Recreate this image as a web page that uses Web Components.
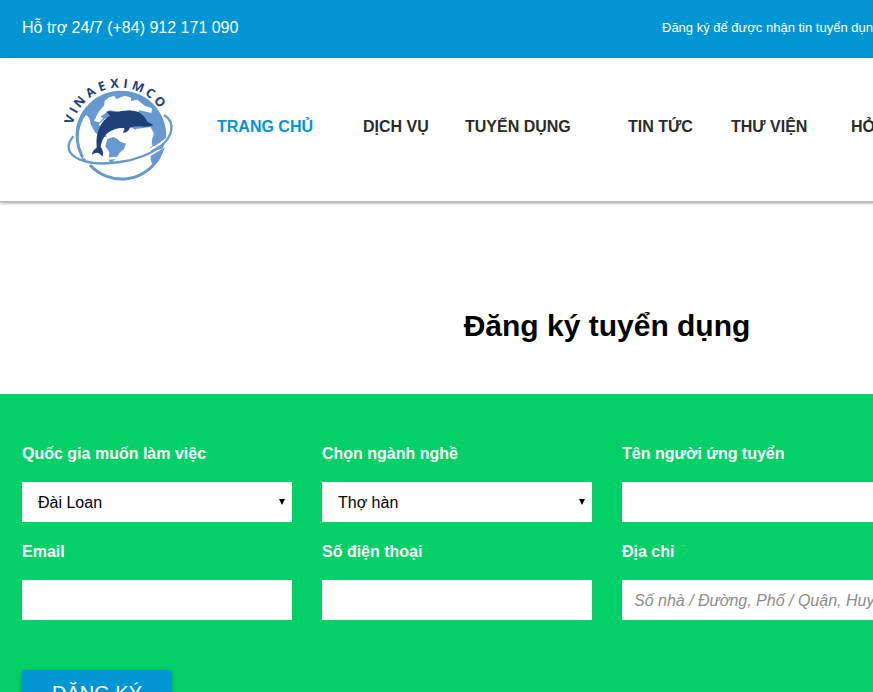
<!DOCTYPE html>
<html lang="vi">
<head>
<meta charset="utf-8">
<title>Vinaeximco – Đăng ký tuyển dụng</title>
<style>
html{overflow-x:hidden}
body{margin:0;background:#fff;font-family:"Liberation Sans",Arial,sans-serif;font-size:16px;line-height:24px}
recruit-page{--blue:#0096d3;--green:#03d066}
</style>
</head>
<body>
<recruit-page></recruit-page>

<script>
const define = (name, html, setup) => customElements.define(name, class extends HTMLElement {
  constructor() {
    super();
    const t = document.createElement('template');
    t.innerHTML = html;
    this.attachShadow({ mode: 'open' }).append(t.content.cloneNode(true));
  }
  connectedCallback() { if (setup) setup(this, this.shadowRoot); }
});

define('top-bar', `
<style>
:host{display:flex;justify-content:space-between;align-items:center;background:var(--blue);color:#fff;padding:0 22px 2px;height:58px;box-sizing:border-box}
.news{font-size:13px;width:530px}
</style>
<div><slot name="support"></slot></div>
<div class="news"><slot name="news"></slot></div>`);

define('site-logo', `
<style>
:host{display:block;width:140px}
a,svg{display:block}
text{font:bold 38px "Open Sans",sans-serif;fill:#1d3f7a}
</style>
<a href="#" aria-label="Vinaeximco">
<svg viewBox="0 0 420 390" width="140" height="130">
<defs>
<path id="arc" d="M64 213A145 145 0 0 1 354 213"/>
<clipPath id="globe"><circle cx="213" cy="213" r="136"/></clipPath>
</defs>
<text><textPath href="#arc"><tspan dx="34 9 7 11 12 12 12 11 8 8">VINAEXIMCO</tspan></textPath></text>
<g clip-path="url(#globe)">
<path fill="#6699cf" d="M76 214Q70 130 130 96Q180 66 240 78Q300 90 334 140Q352 175 350 222L338 250L304 262Q296 240 306 228L300 200L260 196L210 170L166 160L146 178L156 192L170 216L150 216L134 200L122 178Q120 156 108 150Q90 172 84 216Z"/>
<path fill="#fff" d="M176 98L192 92L200 102L224 92L244 98L242 108L262 104L284 122L306 130L304 144L268 136L262 146L240 136L214 142L196 138L178 136L164 146L152 154L160 160L148 172L132 168L146 140L162 122L164 108Z"/>
<path fill="#fff" d="M258 192L302 186L312 206L304 228L308 244L280 254L254 234Z"/>
<path fill="#6699cf" d="M172 222L190 216L202 222L210 230L228 236L222 252L208 264L200 280L182 294L176 284L178 262L166 244Z"/>
<path fill="#6699cf" d="M302 272L326 258L346 246L326 290L306 296L302 284Z"/>
</g>
<path fill="none" stroke="#6699cf" stroke-width="9" d="M112 128A132 132 0 0 0 104 286"/>
<path fill="none" stroke="#6699cf" stroke-width="9" d="M120 300A128 128 0 0 0 332 266"/>
<path fill="none" stroke="#fff" stroke-width="7" d="M352 220C300 266 210 292 100 276"/>
<path fill="none" stroke="#6699cf" stroke-width="7" d="M70 214C46 242 52 268 90 284C150 308 270 292 332 244C368 214 378 172 342 150"/>
<path fill="#1d3f7a" d="M168 140Q184 136 196 142Q230 132 264 140Q282 150 292 170L310 180Q300 187 270 184Q250 184 240 188Q234 203 218 203Q226 192 222 189Q192 188 170 206Q154 224 152 246Q163 260 157 275Q148 262 140 263Q132 264 125 269Q129 254 140 248Q136 210 152 180Q162 162 180 152Q174 144 168 140Z"/>
</svg></a>`);

define('nav-link', `
<style>
:host{display:block}
a{color:#2b2b2b;font-weight:bold;text-decoration:none;text-transform:uppercase;white-space:nowrap}
:host([active]) a{color:var(--blue)}
</style>
<a href="#"><slot></slot></a>`);

define('site-header', `
<style>
:host{display:flex;align-items:center;height:144px;padding-left:50px;box-sizing:border-box;background:#fff;border-bottom:1px solid #b8b8b8;box-shadow:0 1px 3px rgba(0,0,0,.4);position:relative}
nav{display:grid;grid-template-columns:146px 102px 163px 103px 120px auto;margin-left:27px;margin-bottom:6px}
</style>
<site-logo></site-logo>
<nav><slot></slot></nav>`);

define('form-field', `
<style>
:host{display:block}
label{display:block;color:#fff;font-weight:bold;margin-bottom:16px;line-height:24px}
input,select{display:block;width:100%;height:40px;box-sizing:border-box;border:0;border-radius:0;background:#fff;color:#000;font:16px/24px "Liberation Sans",Arial,sans-serif;margin:0;padding:2px 12px 0;appearance:none}
select{padding:2px 16px 0}
input::placeholder{color:#8c8c8c;font-style:italic;opacity:1}
.box{display:grid;align-items:center}
.box>*{grid-area:1/1}
svg{justify-self:end;margin-right:7px;pointer-events:none}
</style>
<label for="c"></label><div class="box"></div>`, (el, root) => {
  root.querySelector('label').textContent = el.getAttribute('label');
  const value = el.getAttribute('option');
  const box = root.querySelector('.box');
  if (value) {
    box.innerHTML = '<select id="c"><option></option></select><svg width="6" height="6" aria-hidden="true"><path d="M0 0h6L3 6z"/></svg>';
    box.querySelector('option').textContent = value;
  } else {
    box.innerHTML = '<input id="c" type="text">';
    box.firstChild.type = el.getAttribute('type') || 'text';
    box.firstChild.placeholder = el.getAttribute('placeholder') || '';
  }
});

define('recruit-form', `
<style>
:host{display:block}
h1{margin:0;padding:103px 0 47px;text-align:center;font-size:30px;line-height:42px;color:#000}
form{background:var(--green);padding:48px 22px 60px}
.grid{display:grid;grid-template-columns:repeat(4,1fr);gap:18px 30px}
button{display:block;margin-top:50px;height:46px;padding:0 30px;border:0;border-radius:2px;background:var(--blue);color:#fff;font:20px/24px "Liberation Sans",Arial,sans-serif;box-shadow:0 2px 4px rgba(0,0,0,.25)}
</style>
<h1>Đăng ký tuyển dụng</h1>
<form>
<div class="grid">
<form-field label="Quốc gia muốn làm việc" option="Đài Loan"></form-field>
<form-field label="Chọn ngành nghề" option="Thợ hàn"></form-field>
<form-field label="Tên người ứng tuyển" style="grid-column:span 2"></form-field>
<form-field label="Email" type="email"></form-field>
<form-field label="Số điện thoại" type="tel"></form-field>
<form-field label="Địa chỉ" placeholder="Số nhà / Đường, Phố / Quận, Huyện" style="grid-column:span 2"></form-field>
</div>
<button type="button">ĐĂNG KÝ</button>
</form>`);

define('recruit-page', `
<style>
:host{display:block;min-width:1214px}
</style>
<top-bar><span slot="support">Hỗ trợ 24/7 (+84) 912 171 090</span><span slot="news">Đăng ký để được nhận tin tuyển dụng</span></top-bar>
<site-header>
<nav-link active>Trang chủ</nav-link><nav-link>Dịch vụ</nav-link><nav-link>Tuyển dụng</nav-link><nav-link>Tin tức</nav-link><nav-link>Thư viện</nav-link><nav-link>Hỏi đáp</nav-link>
</site-header>
<main><recruit-form></recruit-form></main>`);
</script>
</body>
</html>
